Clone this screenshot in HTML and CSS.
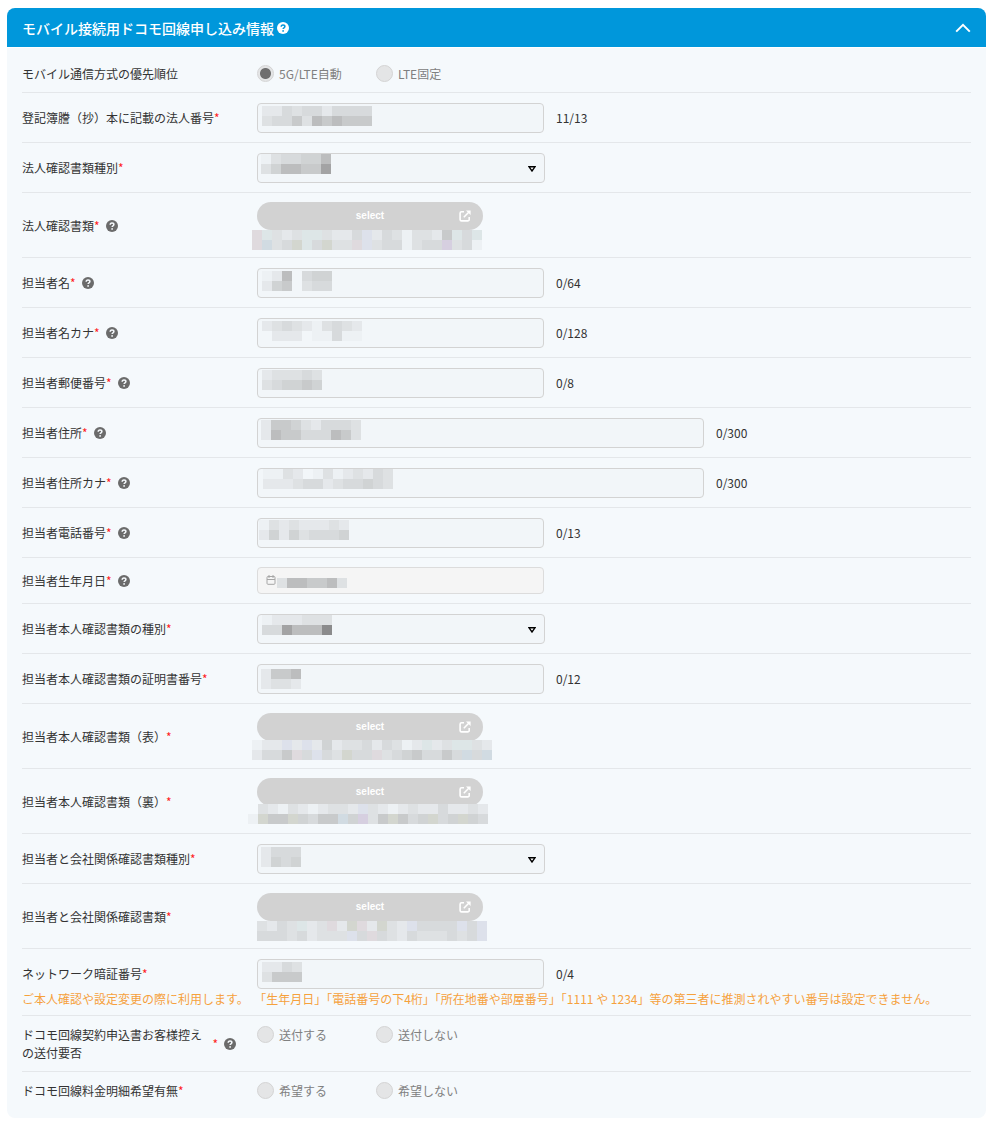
FILE: index.html
```html
<!DOCTYPE html>
<html lang="ja">
<head>
  <meta charset="UTF-8">
  <meta name="viewport" content="width=device-width, initial-scale=1.0">
  <title>モバイル接続用ドコモ回線申し込み情報</title>
  <link rel="stylesheet" href="styles.css">
</head>
<body>
  <svg class="defs" aria-hidden="true">
    <symbol id="help" viewBox="0 0 12 12">
      <circle cx="6" cy="6" r="6" fill="currentColor"/>
      <path class="help-mark" d="M4.2 4.8C4.2 3.6 5 3 6 3s1.9.6 1.9 1.6c0 1.2-1.8 1.3-1.8 2.5" fill="none" stroke-width="1.5"/>
      <circle class="help-dot" cx="6.1" cy="8.9" r=".9"/>
    </symbol>
    <symbol id="open" viewBox="0 0 12 12">
      <path d="M5 1.8H2.6A1.5 1.5 0 0 0 1.1 3.3v6.1a1.5 1.5 0 0 0 1.5 1.5h6.1a1.5 1.5 0 0 0 1.5-1.5V7" fill="none" stroke="currentColor" stroke-width="1.6"/>
      <path d="M4.8 7.2L10 2" fill="none" stroke="currentColor" stroke-width="1.6"/>
      <path d="M7 .4h4.6V5z" fill="currentColor"/>
    </symbol>
    <symbol id="caret" viewBox="0 0 8 6">
      <path d="M1 .8h6L4 5z" fill="#fff" stroke="#000" stroke-width="1.4"/>
    </symbol>
  </svg>

  <form class="card">
    <header class="card-header">
      <h1>モバイル接続用ドコモ回線申し込み情報</h1>
      <button type="button" class="help help-light" aria-label="ヘルプ"><svg><use href="#help"/></svg></button>
      <button type="button" class="toggle" aria-label="閉じる">
        <svg viewBox="0 0 16 10"><path d="M1.2 8.6L8 1.8l6.8 6.8" fill="none" stroke="#fff" stroke-width="2"/></svg>
      </button>
    </header>

    <div class="rows">
      <div class="row row-radio" role="radiogroup" aria-labelledby="modeLabel">
        <div class="name"><span id="modeLabel">モバイル通信方式の優先順位</span></div>
        <div class="radios">
          <label><input type="radio" name="mode" checked disabled>5G/LTE自動</label>
          <label><input type="radio" name="mode" disabled>LTE固定</label>
        </div>
      </div>

      <div class="row">
        <div class="name"><label for="corpNo">登記簿謄（抄）本に記載の法人番号</label><span class="req">*</span></div>
        <div class="control"><input type="text" id="corpNo" disabled><svg class="mosaic" data-x="5" data-y="3" data-rows="bbdcddbdddd cddfcgfgfff"></svg></div>
        <span class="count">11/13</span>
      </div>

      <div class="row">
        <div class="name"><label for="corpDocType">法人確認書類種別</label><span class="req">*</span></div>
        <div class="control control-select"><select id="corpDocType" disabled><option></option></select><svg class="caret"><use href="#caret"/></svg><svg class="mosaic" data-x="4" data-y="1" data-rows="acddeeg ceggffh"></svg></div>
      </div>

      <div class="row row-file">
        <div class="name"><label for="corpDoc">法人確認書類</label><span class="req">*</span><button type="button" class="help" aria-label="ヘルプ"><svg><use href="#help"/></svg></button></div>
        <div class="file">
          <button type="button" class="select-btn" id="corpDoc" disabled><span>select</span><svg><use href="#open"/></svg></button>
          <svg class="mosaic" data-x="-5" data-y="28" data-rows="uscbcsscbbdqbdcaccbfsds urcdtsdtccuqcddacddpcda"></svg>
        </div>
      </div>

      <div class="row">
        <div class="name"><label for="person">担当者名</label><span class="req">*</span><button type="button" class="help" aria-label="ヘルプ"><svg><use href="#help"/></svg></button></div>
        <div class="control"><input type="text" id="person" disabled><svg class="mosaic" data-x="5" data-y="3" data-rows="abg0dee bef0cdd"></svg></div>
        <span class="count">0/64</span>
      </div>

      <div class="row">
        <div class="name"><label for="personKana">担当者名カナ</label><span class="req">*</span><button type="button" class="help" aria-label="ヘルプ"><svg><use href="#help"/></svg></button></div>
        <div class="control"><input type="text" id="personKana" disabled><svg class="mosaic" data-x="5" data-y="3" data-rows="bcdcbacdcb 0bbb0aadaa"></svg></div>
        <span class="count">0/128</span>
      </div>

      <div class="row">
        <div class="name"><label for="zip">担当者郵便番号</label><span class="req">*</span><button type="button" class="help" aria-label="ヘルプ"><svg><use href="#help"/></svg></button></div>
        <div class="control"><input type="text" id="zip" disabled><svg class="mosaic" data-x="5" data-y="2" data-rows="bcccdc cdeefe"></svg></div>
        <span class="count">0/8</span>
      </div>

      <div class="row">
        <div class="name"><label for="address">担当者住所</label><span class="req">*</span><button type="button" class="help" aria-label="ヘルプ"><svg><use href="#help"/></svg></button></div>
        <div class="control control-wide"><input type="text" id="address" disabled><svg class="mosaic" data-x="4" data-y="2" data-rows="bffecbdddc bgffdddgfc"></svg></div>
        <span class="count">0/300</span>
      </div>

      <div class="row">
        <div class="name"><label for="addressKana">担当者住所カナ</label><span class="req">*</span><button type="button" class="help" aria-label="ヘルプ"><svg><use href="#help"/></svg></button></div>
        <div class="control control-wide"><input type="text" id="addressKana" disabled><svg class="mosaic" data-x="6" data-y="1" data-rows="aacb0acabcbdc bbbcddbcddedc"></svg></div>
        <span class="count">0/300</span>
      </div>

      <div class="row">
        <div class="name"><label for="tel">担当者電話番号</label><span class="req">*</span><button type="button" class="help" aria-label="ヘルプ"><svg><use href="#help"/></svg></button></div>
        <div class="control"><input type="text" id="tel" disabled><svg class="mosaic" data-x="2" data-y="2" data-rows="acbcbbbcb bebecddde"></svg></div>
        <span class="count">0/13</span>
      </div>

      <div class="row row-date">
        <div class="name"><label for="birth">担当者生年月日</label><span class="req">*</span><button type="button" class="help" aria-label="ヘルプ"><svg><use href="#help"/></svg></button></div>
        <div class="control">
          <input type="text" id="birth" class="date" disabled>
          <svg class="calendar" viewBox="0 0 10 10"><rect x="1" y="1.5" width="8" height="7.8" rx="1"/><path d="M1 4.5h8M3 0v3M7 0v3"/></svg>
          <svg class="mosaic" data-x="20" data-y="11" data-rows="cggffgc"></svg>
        </div>
      </div>

      <div class="row">
        <div class="name"><label for="idType">担当者本人確認書類の種別</label><span class="req">*</span></div>
        <div class="control control-select"><select id="idType" disabled><option></option></select><svg class="caret"><use href="#caret"/></svg><svg class="mosaic" data-x="5" data-y="1" data-rows="abbbccc ddhgggi"></svg></div>
      </div>

      <div class="row">
        <div class="name"><label for="idNo">担当者本人確認書類の証明書番号</label><span class="req">*</span></div>
        <div class="control"><input type="text" id="idNo" disabled><svg class="mosaic" data-x="4" data-y="5" data-rows="bffg bccb"></svg></div>
        <span class="count">0/12</span>
      </div>

      <div class="row row-file">
        <div class="name"><label for="idFront">担当者本人確認書類（表）</label><span class="req">*</span></div>
        <div class="file">
          <button type="button" class="select-btn" id="idFront" disabled><span>select</span><svg><use href="#open"/></svg></button>
          <svg class="mosaic" data-x="-5" data-y="27" data-rows="abbqbqbebccdbdcabsbcsscb bddfudqdctdducdefddfdrdr"></svg>
        </div>
      </div>

      <div class="row row-file">
        <div class="name"><label for="idBack">担当者本人確認書類（裏）</label><span class="req">*</span></div>
        <div class="file">
          <button type="button" class="select-btn" id="idBack" disabled><span>select</span><svg><use href="#open"/></svg></button>
          <svg class="mosaic" data-x="-9" data-y="26" data-rows="0cbacbabccbqcbabcbbdbbcb atfftedffrepcftfdetdeted"></svg>
        </div>
      </div>

      <div class="row">
        <div class="name"><label for="relType">担当者と会社関係確認書類種別</label><span class="req">*</span></div>
        <div class="control control-select"><select id="relType" disabled><option></option></select><svg class="caret"><use href="#caret"/></svg><svg class="mosaic" data-x="4" data-y="3" data-rows="bddd bede"></svg></div>
      </div>

      <div class="row row-file">
        <div class="name"><label for="relDoc">担当者と会社関係確認書類</label><span class="req">*</span></div>
        <div class="file">
          <button type="button" class="select-btn" id="relDoc" disabled><span>select</span><svg><use href="#open"/></svg></button>
          <svg class="mosaic" data-x="0" data-y="28" data-rows="cbdcsbcubtubtcbqddddqdq dddcdbcccqdudcbdcccdcdq"></svg>
        </div>
      </div>

      <div class="row row-note">
        <div class="name"><label for="pin">ネットワーク暗証番号</label><span class="req">*</span></div>
        <div class="control"><input type="text" id="pin" disabled><svg class="mosaic" data-x="5" data-y="3" data-rows="bbdc cfff"></svg></div>
        <span class="count">0/4</span>
        <p class="note">ご本人確認や設定変更の際に利用します。&nbsp; 「生年月日」「電話番号の下4桁」「所在地番や部屋番号」「1111 や 1234」等の第三者に推測されやすい番号は設定できません。</p>
      </div>

      <div class="row row-radio" role="radiogroup" aria-labelledby="copyLabel">
        <div class="name"><span id="copyLabel">ドコモ回線契約申込書お客様控えの送付要否</span><span class="req">*</span><button type="button" class="help" aria-label="ヘルプ"><svg><use href="#help"/></svg></button></div>
        <div class="radios">
          <label><input type="radio" name="copy" disabled>送付する</label>
          <label><input type="radio" name="copy" disabled>送付しない</label>
        </div>
      </div>

      <div class="row row-radio" role="radiogroup" aria-labelledby="billLabel">
        <div class="name"><span id="billLabel">ドコモ回線料金明細希望有無</span><span class="req">*</span></div>
        <div class="radios">
          <label><input type="radio" name="bill" disabled>希望する</label>
          <label><input type="radio" name="bill" disabled>希望しない</label>
        </div>
      </div>
    </div>
  </form>

  <script src="mosaic.js"></script>
</body>
</html>
```
FILE: styles.css
```css
* {
  box-sizing: border-box;
}
body {
  margin: 0;
  padding: 8px 6px 8px 7px;
  background: #fff;
  color: #333;
  font-family: "Noto Sans CJK JP", sans-serif;
  font-size: 12px;
  line-height: 18px;
}
button, input, select {
  font: inherit;
  margin: 0;
}
svg {
  display: block;
}
.defs {
  display: none;
}
.card {
  background: #f5f9fc;
  border-radius: 8px;
  overflow: hidden;
}
.card-header {
  display: flex;
  align-items: center;
  height: 40px;
  padding: 0 15px;
  background: #0097db;
  border-bottom: 1px solid #fff;
  color: #fff;
}
h1 {
  margin: 0;
  font-size: 14px;
  line-height: 20px;
  font-weight: 500;
}
.help {
  --mark: #f5f9fc;
  flex: none;
  width: 12px;
  height: 12px;
  margin-left: 6px;
  padding: 0;
  border: none;
  background: none;
  color: #6b6b6b;
}
.help-light {
  --mark: #0097db;
  margin-left: 3px;
  color: #fff;
}
.help svg {
  width: 12px;
  height: 12px;
}
.help-mark {
  stroke: var(--mark);
}
.help-dot {
  fill: var(--mark);
}
.toggle {
  margin-left: auto;
  padding: 0;
  border: none;
  background: none;
}
.toggle svg {
  width: 16px;
  height: 10px;
}
.rows {
  padding: 7px 15px 9px;
}
.row {
  display: flex;
  flex-wrap: wrap;
  align-items: center;
  padding: 10px 0 9px;
  border-bottom: 1px solid #e4e7ea;
}
.row:last-child {
  border-bottom: none;
}
.name {
  display: flex;
  align-items: center;
  width: 235px;
  padding-right: 21px;
}
.req {
  flex: none;
  color: #f22;
}

/* text boxes and drop-downs */
.control {
  position: relative;
  width: 287px;
}
.control-wide {
  width: 447px;
}
.control-select {
  width: 288px;
}
.control input,
.control select {
  display: block;
  width: 100%;
  height: 30px;
  padding: 0 10px;
  background: #f2f6f9;
  border: 1px solid #d3d3d3;
  border-radius: 4px;
  opacity: 1;
  appearance: none;
}
.control .date {
  height: 27px;
  padding-left: 24px;
  background: #f5f5f5;
  border-color: #dcdcdc;
}
.row-date {
  padding: 9px 0;
}
.caret {
  position: absolute;
  top: 13px;
  right: 9px;
  width: 8px;
  height: 6px;
}
.calendar {
  position: absolute;
  top: 8px;
  left: 9px;
  width: 10px;
  height: 10px;
  fill: none;
  stroke: #a6a6a6;
}
.count {
  margin-left: 12px;
}
.mosaic {
  position: absolute;
  top: 0;
  left: 0;
  width: 100%;
  height: 100%;
  overflow: visible;
  pointer-events: none;
}

/* file rows */
.row-file {
  padding: 9px 0 7px;
}
.file {
  position: relative;
  padding-bottom: 20px;
}
.select-btn {
  display: grid;
  grid-template-columns: 1fr auto 1fr;
  align-items: center;
  width: 226px;
  height: 28px;
  padding: 0 12px;
  border: none;
  border-radius: 14px;
  background: #d2d2d2;
  color: #fff;
  font-family: "Liberation Sans", Arial, sans-serif;
  font-size: 10px;
  font-weight: bold;
}
.select-btn span {
  grid-column: 2;
}
.select-btn svg {
  width: 12px;
  height: 12px;
  justify-self: end;
}

/* radio rows */
.row-radio {
  align-items: flex-start;
}
.radios {
  display: grid;
  grid-template-columns: 119px 119px;
  color: #808080;
}
.radios label {
  display: flex;
  align-items: center;
  gap: 5px;
  height: 17px;
}
.radios input {
  width: 17px;
  height: 17px;
  border: 1px solid #d4d4d4;
  border-radius: 50%;
  background: #e4e5e6;
  appearance: none;
}
.radios input:checked {
  background: radial-gradient(circle, #6f6f6f 5px, #e4e5e6 6px);
}

.row-note {
  padding-bottom: 7px;
}
.note {
  width: 100%;
  margin: 1px 0 0;
  color: #f5a13c;
}
```
FILE: mosaic.js
```js
// Masks for the hidden values: one letter per 10px cell, rows split by a space
const shades = {
  a: '#edf1f4', b: '#e5e8eb', c: '#dee1e3', d: '#d7dadc', e: '#d0d3d4',
  f: '#c8cacb', g: '#bcbdbe', h: '#a3a3a4', i: '#8b8b8c',
  p: '#d6cfe0', q: '#dde1eb', r: '#d1dbe2', s: '#dde6e7', t: '#d3d6cf', u: '#dfdade'
};

document.querySelectorAll('.mosaic').forEach(svg => {
  const left = Number(svg.dataset.x);
  const top = Number(svg.dataset.y);
  svg.dataset.rows.split(' ').forEach((row, r) => {
    [...row].forEach((cell, c) => {
      if (!shades[cell]) return;
      const rect = document.createElementNS('http://www.w3.org/2000/svg', 'rect');
      rect.setAttribute('x', left + c * 10);
      rect.setAttribute('y', top + r * 10);
      rect.setAttribute('width', 10);
      rect.setAttribute('height', 10);
      rect.setAttribute('fill', shades[cell]);
      svg.appendChild(rect);
    });
  });
});
```
